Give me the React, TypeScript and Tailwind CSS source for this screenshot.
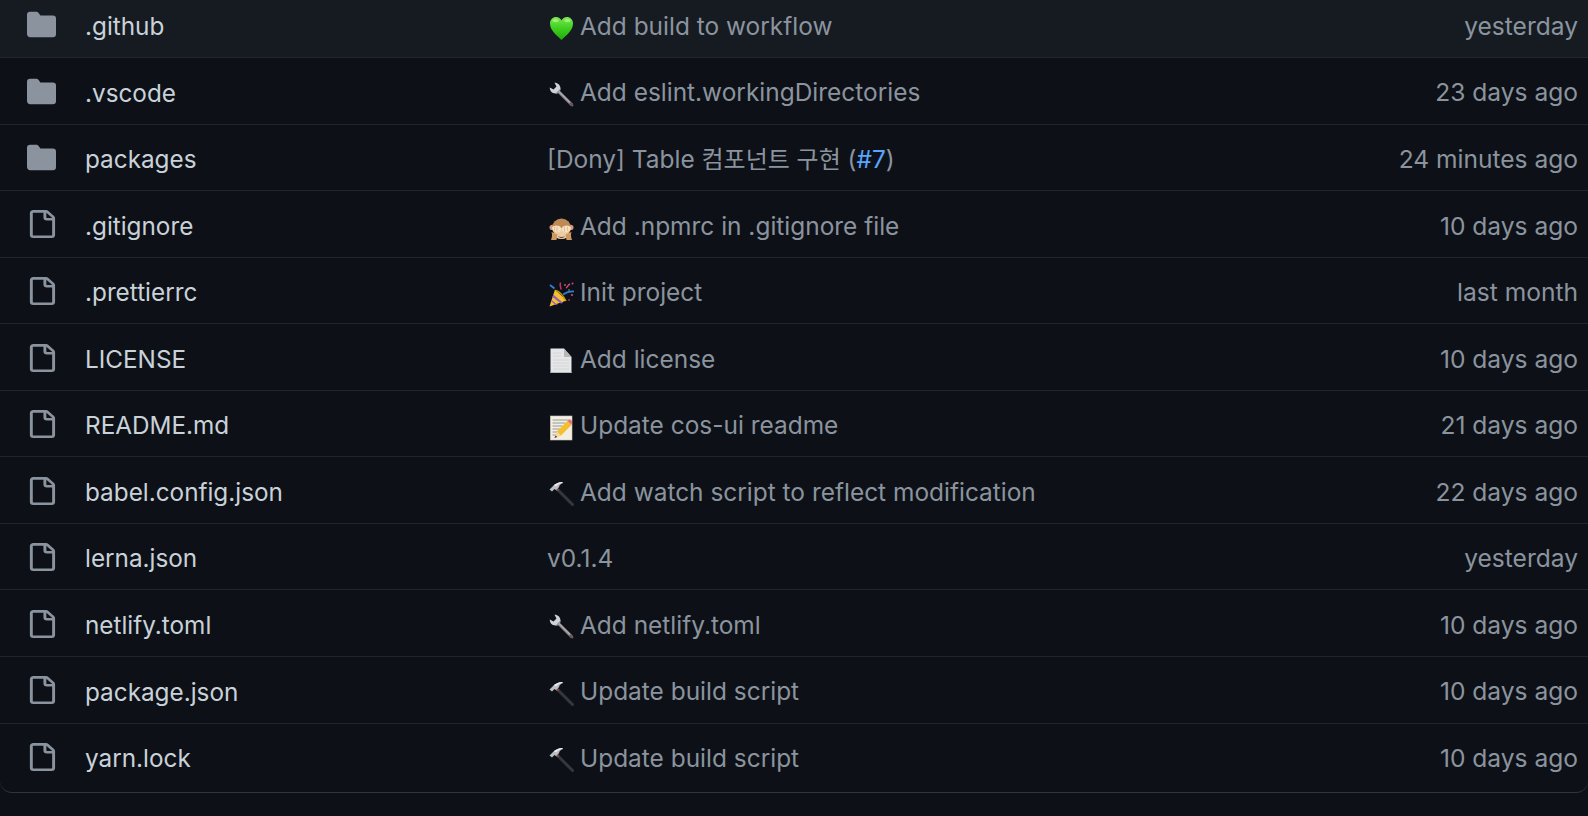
import React from "react";

const Folder = () => (
  <svg viewBox="0 0 16 16" className="w-[29px] h-[29px] fill-[#8b949e]">
    <path d="M1.75 1A1.75 1.75 0 000 2.75v10.5C0 14.216.784 15 1.75 15h12.5A1.75 1.75 0 0016 13.25v-8.5A1.75 1.75 0 0014.25 3H7.5a.25.25 0 01-.2-.1l-.9-1.2C6.07 1.26 5.55 1 5 1H1.75z" />
  </svg>
);

const FileIcon = () => (
  <svg viewBox="0 0 16 16" preserveAspectRatio="none" className="w-[31px] h-[28px] -ml-[1px] fill-[#8b949e]">
    <path d="M2 1.75C2 .784 2.784 0 3.750 0h6.586c.464 0 .909.184 1.237.513l2.914 2.914c.329.328.513.773.513 1.237v9.586A1.75 1.75 0 0 1 13.25 16h-9.5A1.75 1.75 0 0 1 2 14.25Zm1.75-.25a.25.25 0 0 0-.25.25v12.500c0 .138.112.25.25.25h9.5a.25.25 0 0 0 .25-.25V6h-2.75A1.75 1.75 0 0 1 9 4.25V1.5Zm6.75.062V4.25c0 .138.112.25.25.25h2.688l-.011-.013-2.914-2.914-.013-.011Z" />
  </svg>
);

const box = "w-[26px] h-[26px] shrink-0 mt-[4px]";

const Heart = () => (
  <svg viewBox="0 0 26 26" className={box}>
    <defs>
      <linearGradient id="h" x1="0" y1="0" x2="0" y2="1">
        <stop offset="0" stopColor="#7be84f" />
        <stop offset="0.5" stopColor="#3fcf1f" />
        <stop offset="1" stopColor="#1fa80e" />
      </linearGradient>
    </defs>
    <path d="M12.500 25C8 20.500 1 15.500 1 8.500 1 4.500 4 2 7 2c2.500 0 4.500 1.300 5.500 3.500C13.500 3.300 15.500 2 18 2c3 0 6 2.500 6 6.500C24 15.500 17 20.500 12.500 25Z" fill="url(#h)" />
    <ellipse cx="6.500" cy="5.500" rx="3" ry="1.500" fill="#b5f59a" opacity="0.7" />
    <ellipse cx="18.500" cy="5.500" rx="3" ry="1.500" fill="#b5f59a" opacity="0.7" />
  </svg>
);

const Wrench = () => (
  <svg viewBox="0 0 26 26" className={box}>
    <path d="M8 8 22.500 22.500" stroke="#8f8a90" strokeWidth="3" strokeLinecap="round" />
    <path d="M9 8.500 22 21.500" stroke="#c9c4c8" strokeWidth="0.900" />
    <path d="M21.500 21.500 23.300 23.300" stroke="#6a5458" strokeWidth="2.400" strokeLinecap="round" />
    <path d="M5.500 .8C8.500 .6 11.500 3 11.500 6.500 11.500 9.500 9 11.800 6.500 11.500 3 11.500 .6 8.500 .8 5.500L4.500 7.500 7.500 4.500Z" fill="#cfd3d7" />
    <path d="M6.500 11.500C9 11.800 11.500 9.500 11.500 6.500L9 9Z" fill="#8e949b" />
  </svg>
);

const Monkey = () => (
  <svg viewBox="0 0 26 26" className={box}>
    <g transform="translate(0 2.500) scale(1 .9)">
      <circle cx="3.500" cy="11" r="3" fill="#d59a86" />
      <circle cx="21.500" cy="11" r="3" fill="#d59a86" />
      <ellipse cx="12.500" cy="11.500" rx="9.500" ry="10.500" fill="#bd8a55" />
      <ellipse cx="12.500" cy="18" rx="7.500" ry="6" fill="#eccda6" />
      <path d="M3 11c2-3 7.500-3 9 .5 1 2.500-1 5-3.800 5C5 16.500 3 14.500 3 11Z" fill="#f7dfc0" />
      <path d="M22 11c-2-3-7.500-3-9 .5-1 2.500 1 5 3.800 5 3.200 0 5.200-2 5.200-5.500Z" fill="#f7dfc0" />
      <path d="M5.500 10.500v4M8 10v5.500M15.500 10v5.500M18.500 10.500v4" stroke="#d5ab7c" strokeWidth="0.700" />
      <path d="M9 20.500c2 1.600 5 1.600 7 0-2 3-5 3-7 0Z" fill="#6e4a2a" />
      <path d="M2.500 16c1 3 .5 6-.5 9h5.500l1-6.500Z" fill="#cf9a62" />
      <path d="M22.500 16c-1 3-.5 6 .5 9h-5.500l-1-6.500Z" fill="#cf9a62" />
    </g>
  </svg>
);

const Party = () => (
  <svg viewBox="0 0 26 26" className={box}>
    <path d="M0.500 25.500 6 8.500 17.500 19.500Z" fill="#f0c22e" />
    <path d="M2.600 19 8.800 24 6.300 23.700 2.200 20.300Z" fill="#9a5bc4" />
    <path d="M4.300 13.500 14.200 22 11.800 22.600 3.500 16Z" fill="#9a5bc4" />
    <path d="M7 9.500c3 1 7 5 10 10.500" stroke="#c88f15" strokeWidth="1.400" fill="none" />
    <path d="M14 13.500c3-2 6-3.500 11-3" stroke="#2f7fe0" strokeWidth="1.600" fill="none" />
    <path d="M12 8.500c0-2-1.500-4-.5-7" stroke="#c62f6f" strokeWidth="1.500" fill="none" />
    <path d="M17 7c2-1 1.500-3 4-4" stroke="#d8437f" strokeWidth="1.400" fill="none" />
    <path d="M1 4 5.500 7.500" stroke="#2f7fe0" strokeWidth="1.800" />
    <circle cx="23.500" cy="2.500" r="1" fill="#d8437f" />
    <circle cx="23" cy="14" r="0.900" fill="#e0607f" />
    <circle cx="20" cy="19" r="0.800" fill="#e0607f" />
    <circle cx="16" cy="4" r="0.800" fill="#f0c22e" />
    <circle cx="20" cy="9" r="0.800" fill="#7ac142" />
  </svg>
);

const Page = () => (
  <svg viewBox="0 0 26 26" className={box}>
    <path d="M1.500 .5h13.500l7.500 8.500v16H1.500Z" fill="#e4e6e7" />
    <path d="M15 .5 22.500 9H15Z" fill="#b5b8bb" />
    <path d="M1.500 24h21v1h-21Z" fill="#b5b8bb" />
    <path d="M4 5h8M4 8h8M4 12h16M4 15h16M4 18h16M4 21h16" stroke="#cfd1d3" strokeWidth="0.800" />
  </svg>
);

const Memo = () => (
  <svg viewBox="0 0 26 26" className={box}>
    <rect x="1.300" y="1" width="21.700" height="24" fill="#f2eee2" stroke="#c6c2b6" strokeWidth="0.600" />
    <path d="M3.500 5h16M3.500 8h13M3.500 11h10M3.500 14h8M3.500 17h5M3.500 20h4" stroke="#7f8488" strokeWidth="0.800" />
    <path d="M5.500 23 8 16.500 18.500 6 22.500 10 12 20.500Z" fill="#f5bf2b" />
    <path d="M5.500 23 8 16.500 12 20.500Z" fill="#f3d9a8" />
    <path d="M5.500 23 6.500 20.400 8.200 22Z" fill="#3a3a3a" />
    <path d="M18.500 6 20 4.500c1-.8 3.500 1.500 3 3L22.500 10Z" fill="#e8707a" />
  </svg>
);

const Hammer = () => (
  <svg viewBox="0 0 26 26" className={box}>
    <path d="M8.500 8.500 23.500 23.500" stroke="#34373b" strokeWidth="3" strokeLinecap="round" />
    <path d="M.5 8.500 5 4C7 2.500 10 1 13 1L14 2C12 2.500 10.500 4 10 6L7.500 9.500 5.500 8 3 10.500Z" fill="#b9bec4" />
    <path d="M5 4C7 2.500 10 1 13 1L14 2C11 2 8.500 3.500 7 5.500Z" fill="#eef0f2" />
    <path d="M7 9 9 7.500 10.500 9 9 10.500Z" fill="#7a4b42" />
  </svg>
);

type Row = {
  kind: "d" | "f";
  name: string;
  emoji?: React.FC;
  msg: React.ReactNode;
  time: string;
};

const rows: Row[] = [
  { kind: "d", name: ".github", emoji: Heart, msg: "Add build to workflow", time: "yesterday" },
  { kind: "d", name: ".vscode", emoji: Wrench, msg: "Add eslint.workingDirectories", time: "23 days ago" },
  {
    kind: "d",
    name: "packages",
    msg: (
      <>
        [Dony] Table <span className="text-[24px]">컴포넌트 구현</span> (<span className="text-[#58a6ff]">#7</span>)
      </>
    ),
    time: "24 minutes ago",
  },
  { kind: "f", name: ".gitignore", emoji: Monkey, msg: "Add .npmrc in .gitignore file", time: "10 days ago" },
  { kind: "f", name: ".prettierrc", emoji: Party, msg: "Init project", time: "last month" },
  { kind: "f", name: "LICENSE", emoji: Page, msg: "Add license", time: "10 days ago" },
  { kind: "f", name: "README.md", emoji: Memo, msg: "Update cos-ui readme", time: "21 days ago" },
  { kind: "f", name: "babel.config.json", emoji: Hammer, msg: "Add watch script to reflect modification", time: "22 days ago" },
  { kind: "f", name: "lerna.json", msg: "v0.1.4", time: "yesterday" },
  { kind: "f", name: "netlify.toml", emoji: Wrench, msg: "Add netlify.toml", time: "10 days ago" },
  { kind: "f", name: "package.json", emoji: Hammer, msg: "Update build script", time: "10 days ago" },
  { kind: "f", name: "yarn.lock", emoji: Hammer, msg: "Update build script", time: "10 days ago" },
];

export default function App() {
  return (
    <div className="h-[816px] overflow-hidden bg-[#0d1117] font-['Inter','Noto_Sans_CJK_KR',sans-serif] text-[24.55px]">
      <div className="-mt-[8.5px] rounded-b-[12px] border-b border-[#30363d]">
        {rows.map((r, i) => {
          const Emoji = r.emoji;
          return (
            <div
              key={r.name}
              className={`flex items-center pl-[27px] pr-[10px] pt-[4px] ${
                i === rows.length - 1 ? "h-[68px] pb-[3px]" : "h-[66.55px] border-b border-[#21262d]"
              } ${i === 0 ? "bg-[#161b22]" : ""}`}
            >
              <div className="flex w-[58px] shrink-0 mb-[3px]">{r.kind === "d" ? <Folder /> : <FileIcon />}</div>
              <div className="w-[464px] shrink-0 text-[24.3px] text-[#c9d1d9]">{r.name}</div>
              <div className="flex flex-1 items-center gap-[5px] text-[24.45px] text-[#8b949e]">
                {Emoji ? <Emoji /> : null}
                <span className={Emoji ? "" : "-ml-[2px]"}>{r.msg}</span>
              </div>
              <div className="text-[#8b949e]">{r.time}</div>
            </div>
          );
        })}
      </div>
    </div>
  );
}
